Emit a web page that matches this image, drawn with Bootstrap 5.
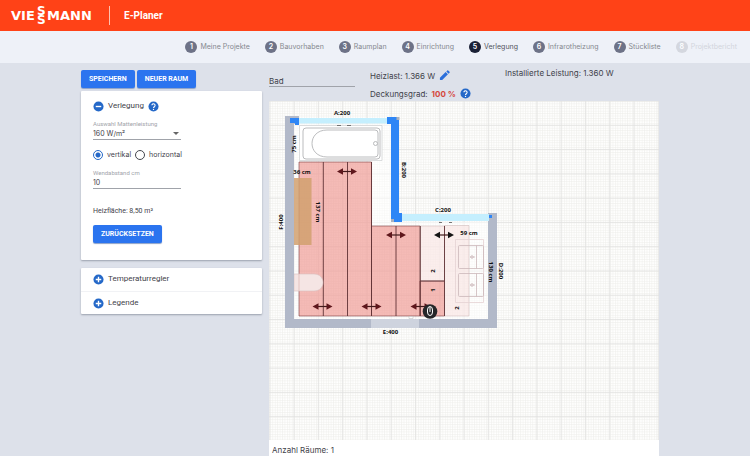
<!DOCTYPE html>
<html lang="de">
<head>
<meta charset="utf-8">
<meta name="viewport" content="width=device-width, initial-scale=1">
<title>E-Planer</title>
<link href="https://cdn.jsdelivr.net/npm/bootstrap@5.3.0/dist/css/bootstrap.min.css" rel="stylesheet">
<style>
:root { --brand: #ff4217; --action: #2b74ef; --icon: #2468c8; }
body { background: #dde1ea; color: #3f424a; font-family: Inter, Roboto, sans-serif; font-size: 8px; line-height: 12px; }
.topbar { background: var(--brand); height: 31px; padding: 0 8px; }
.logo { width: 88px; height: 31px; }
.logo text { font: bold 13px/1 "DejaVu Sans", sans-serif; fill: #fff; }
.logo .stacked { font-size: 12px; }
.topbar-rule { width: 1px; height: 19px; background: #ffc0ae; margin: 0 14px 0 13px; }
.product { font: 700 10px/14px Roboto, sans-serif; }
.steps { background: #eef1f8; height: 32px; padding: 0 13px; gap: 15px; font-size: 7px; }
.step { color: #85888f; gap: 3px; }
.step-no { width: 12px; height: 12px; border-radius: 50%; background: #6d7287; color: #fff; font-weight: 600; line-height: 12px; text-align: center; }
.step.current { color: #50535c; }
.step.current .step-no { background: #1b2136; }
.step.locked { color: #d2d5dc; }
.step.locked .step-no { background: #d4d7df; }
.workspace { padding: 7px 91px 0 81px; gap: 7px; }
.side { width: 181px; font-family: Roboto, sans-serif; }
.actions { gap: 2px; }
.act { background: var(--action); color: #fff; border: 0; border-radius: 2px; height: 18px; padding: 0 8px; font-size: 7px; font-weight: 700; line-height: 18px; box-shadow: 0 1px 1px #8aa0c8; }
.act:hover { background: #195fd6; color: #fff; }
.panel { background: #fff; border-radius: 1px; box-shadow: 0 1px 2px #9aa0ad; }
.panel-main { padding: 9px 12px 17px; margin-top: 3px; }
.toggle { border: 0; background: none; padding: 0; color: inherit; }
.ico { width: 11px; height: 11px; display: block; }
.fields { width: 88px; font-family: Inter, sans-serif; }
.caption { font-size: 6px; line-height: 8px; color: #a2a4aa; font-family: Roboto, sans-serif; }
.line-input { display: block; width: 100%; height: 12px; padding: 0; border: 0; border-bottom: 1px solid #a0a3aa; border-radius: 0; background: transparent; color: inherit; font-size: 7px; line-height: 11px; appearance: none; outline: 0; }
.pick::after { content: ""; position: absolute; right: 2px; bottom: 5px; border: 3px solid transparent; border-top-color: #666; border-bottom: 0; }
.radios { gap: 4px; margin: 9px 0 8px; font-family: Inter, sans-serif; font-size: 7px; }
.radios input { appearance: none; width: 10px; height: 10px; margin: 0; border: 1px solid #44474e; border-radius: 50%; background: #fff; }
.radios input:checked { border-color: var(--icon); background: radial-gradient(circle, var(--icon) 0 2px, #fff 3px); }
.area { font-size: 7px; }
.panel-row { padding: 5px 12px; height: 23px; }
.panel-row + .panel-row { border-top: 1px solid #f1f2f5; }
.facts { height: 31px; line-height: 10px; }
.room { width: 86px; margin: 5px 15px 0 0; }
.room .line-input { font-size: 8px; }
.load { width: 135px; }
.cover-row { margin-top: 7px; }
.cover { color: #d5473c; }
.installed { line-height: 6px; }
.plan { background: #fff; }
.plan svg { display: block; width: 100%; }
.plan text { font-family: "Open Sans", sans-serif; font-size: 6px; font-weight: 700; fill: #111; text-anchor: middle; }
.total { padding: 4px 3px 0; }
</style>
</head>
<body>
<svg class="d-none" aria-hidden="true">
  <symbol id="plus" viewBox="0 0 24 24"><circle cx="12" cy="12" r="11" fill="#2468c8"/><path d="M12 6v12M6 12h12" stroke="#fff" stroke-width="3"/></symbol>
  <symbol id="minus" viewBox="0 0 24 24"><circle cx="12" cy="12" r="11" fill="#2468c8"/><path d="M6 12h12" stroke="#fff" stroke-width="3"/></symbol>
  <symbol id="help" viewBox="0 0 24 24"><circle cx="12" cy="12" r="11" fill="#2468c8"/><path d="M8.5 9.5a3.5 3.5 0 1 1 5.7 2.7c-1.5 1.2-2.2 1.6-2.2 3.2" fill="none" stroke="#fff" stroke-width="2.4"/><circle cx="12" cy="18.3" r="1.5" fill="#fff"/></symbol>
  <symbol id="pencil" viewBox="0 0 24 24"><path d="M2 22v-5L14.500 4.500l5 5L7 22zM16 3l2-2q1-1 2 0l3 3q1 1 0 2l-2 2z" fill="#2b6fdb"/></symbol>
</svg>

<header class="topbar d-flex align-items-center">
  <svg class="logo" viewBox="0 0 88 31" role="img" aria-label="Viessmann">
    <text x="3" y="20">VIE</text><text class="stacked" x="29" y="15">S</text><text class="stacked" x="29" y="24">S</text><text x="39" y="20">MANN</text>
  </svg>
  <div class="topbar-rule"></div>
  <span class="product text-white">E-Planer</span>
</header>

<nav class="steps d-flex align-items-center justify-content-end text-nowrap" aria-label="Schritte">
  <a href="#" class="step d-flex align-items-center text-decoration-none"><span class="step-no">1</span>Meine Projekte</a>
  <a href="#" class="step d-flex align-items-center text-decoration-none"><span class="step-no">2</span>Bauvorhaben</a>
  <a href="#" class="step d-flex align-items-center text-decoration-none"><span class="step-no">3</span>Raumplan</a>
  <a href="#" class="step d-flex align-items-center text-decoration-none"><span class="step-no">4</span>Einrichtung</a>
  <a href="#" class="step current d-flex align-items-center text-decoration-none" aria-current="step"><span class="step-no">5</span>Verlegung</a>
  <a href="#" class="step d-flex align-items-center text-decoration-none"><span class="step-no">6</span>Infrarotheizung</a>
  <a href="#" class="step d-flex align-items-center text-decoration-none"><span class="step-no">7</span>Stückliste</a>
  <a href="#" class="step locked d-flex align-items-center text-decoration-none" aria-disabled="true"><span class="step-no">8</span>Projektbericht</a>
</nav>

<main class="workspace d-flex align-items-start">
  <aside class="side flex-shrink-0">
    <div class="actions d-flex">
      <button type="button" class="btn act">SPEICHERN</button>
      <button type="button" class="btn act">NEUER RAUM</button>
    </div>
    <form class="panel panel-main">
      <div class="d-flex align-items-center">
        <button type="button" class="toggle d-flex align-items-center gap-1"><svg class="ico"><use href="#minus"/></svg>Verlegung</button>
        <button type="button" class="toggle ms-1" aria-label="Hilfe"><svg class="ico"><use href="#help"/></svg></button>
      </div>
      <div class="fields pick position-relative mt-2">
        <label class="caption d-block" for="power">Auswahl Mattenleistung</label>
        <select class="line-input" id="power"><option>160 W/m²</option></select>
      </div>
      <div class="radios d-flex align-items-center">
        <input type="radio" name="dir" id="vert" checked><label for="vert">vertikal</label>
        <input type="radio" name="dir" id="hori"><label for="hori">horizontal</label>
      </div>
      <div class="fields">
        <label class="caption d-block" for="dist">Wendabstand cm</label>
        <input class="line-input" id="dist" type="text" value="10">
      </div>
      <p class="area mt-3 mb-2">Heizfläche: 8,50 m²</p>
      <button type="button" class="btn act">ZURÜCKSETZEN</button>
    </form>
    <div class="panel mt-2">
      <div class="panel-row"><button type="button" class="toggle d-flex align-items-center gap-1"><svg class="ico"><use href="#plus"/></svg>Temperaturregler</button></div>
      <div class="panel-row"><button type="button" class="toggle d-flex align-items-center gap-1"><svg class="ico"><use href="#plus"/></svg>Legende</button></div>
    </div>
  </aside>

  <section class="flex-grow-1">
    <div class="facts d-flex text-nowrap">
      <div class="room"><input class="line-input" type="text" value="Bad" aria-label="Raumname"></div>
      <div class="load">
        <div class="d-flex align-items-center gap-1">Heizlast: 1.366 W <button type="button" class="toggle" aria-label="Bearbeiten"><svg class="ico"><use href="#pencil"/></svg></button></div>
        <div class="cover-row d-flex align-items-center gap-1">Deckungsgrad: <b class="cover">100 %</b><button type="button" class="toggle" aria-label="Hilfe"><svg class="ico"><use href="#help"/></svg></button></div>
      </div>
      <div class="installed">Installierte Leistung: 1.360 W</div>
    </div>
    <div class="plan">
      <svg viewBox="269 101 390 339" role="img" aria-label="Grundriss Bad">
        <defs>
          <pattern id="fine" x="269.900" y="101" width="2.430" height="2.430" patternUnits="userSpaceOnUse"><path d="M0 .5H2.430M.5 0V2.430" stroke="#eeeeeb" stroke-width=".6"/></pattern>
          <pattern id="coarse" x="269.300" y="100.500" width="24.280" height="24.280" patternUnits="userSpaceOnUse"><path d="M0 .5H24.280M.5 0V24.280" stroke="#e2e2e0" stroke-width=".8"/></pattern>
          <g id="arrows"><path d="M-6 0H6" stroke="#40191a" stroke-width="1.200"/><path d="M-10 0l6-3.200v6.400zM10 0l-6-3.200v6.400z"/></g>
        </defs>
        <path fill="#fff" d="M269 101h390v339H269z"/>
        <path fill="url(#fine)" d="M269 101h390v339H269z"/>
        <path fill="url(#coarse)" d="M269 101h390v339H269z"/>
        <path fill="#fff" fill-opacity=".5" d="M294 124h97v98h97v97H294z"/>
        <g fill="#e5544c" fill-opacity=".4" stroke="#75373a" stroke-width=".6">
          <path d="M299 162h72.500v154H299zM371.500 226H420v90h-48.500zM420 281h24.500v35H420z"/>
        </g>
        <path fill="#f7dedb" fill-opacity=".5" stroke="#c9b3b3" stroke-width=".5" d="M420 226h24.500v55H420zM444.500 225.500H469V316h-24.500z"/>
        <path d="M323.300 162v154M347.500 162v154M371.500 162v154M396 226v90M420.300 226v90M444.500 226v90M420 281h24.500" stroke="#603236" stroke-width=".9"/>
        <path d="M294 178h17.500v67H294z" fill="#d1a06e" fill-opacity=".85"/>
        <path d="M294 274h20c12 0 12 17 0 17h-20z" fill="#f5e5e4" stroke="#d8c1c1" stroke-width=".6"/>
        <path d="M299 274v17" stroke="#dcb4b2" stroke-width=".7"/>
        <g fill="#fff" stroke="#a9abad" stroke-width=".8">
          <path d="M299.500 125.500h82.500v35h-82.500z" stroke="#d2d4d6"/>
          <rect x="303" y="128" width="77" height="31" rx="3"/>
          <path d="M327 130h48q3 0 3 3v21q0 3-3 3h-48c-20 0-20-27 0-27z"/>
          <circle cx="375.500" cy="143.500" r="2"/>
        </g>
        <g fill="none" stroke="#ccb8ba" stroke-width=".8">
          <path d="M455.500 239.500h28v63h-28z" stroke="#e4d2d3"/>
          <rect x="458.500" y="245.500" width="25" height="23" rx="1"/><path d="M476.500 245.500v23M475 257h-5"/><circle cx="472" cy="257" r="1.300"/>
          <rect x="458.500" y="273.500" width="25" height="23" rx="1"/><path d="M476.500 273.500v23M475 285h-5"/><circle cx="472" cy="285" r="1.300"/>
        </g>
        <path fill="#b2b9c9" d="M285 116h14v8h-5v195h194V213h9v115H285z"/>
        <path fill="#ced3de" d="M371 319h48v9h-48z"/>
        <path fill="#c5effe" d="M299 118h88v5.500h-88zM402 214h87v7h-87z"/>
        <path fill="#2e86f6" d="M290 118h9v7h-4v-2h-5zM387 117h12v96h3v9h-11v-98h-4zM489 215h3v3h-3z"/>
        <path fill="#a9b1bf" d="M396.500 117h3v3h-3zM391 219h3v3h-3z"/>
        <path d="M337 125.500h4M347 125.500h4M439 222.500h3M449 222.500h3" stroke="#666" stroke-width=".9"/>
        <g fill="#5e171c"><use href="#arrows" x="347" y="171.500"/><use href="#arrows" x="396" y="235"/><use href="#arrows" x="322.500" y="306.500"/><use href="#arrows" x="371.500" y="306.500"/><use href="#arrows" x="420.500" y="306.500"/></g>
        <use href="#arrows" x="444" y="235" fill="#141414"/>
        <circle cx="430" cy="311.500" r="7.300" fill="#252628"/>
        <path d="M427.500 310q0-3.500 2.500-3.500t2.500 3.500v2q0 3.500-2.500 3.500t-2.500-3.500zM430 307v5" fill="none" stroke="#fff" stroke-width="1"/>
        <path d="M409 316.500h4v2h-4z" fill="#fff" stroke="#aaa" stroke-width=".4"/>
        <text x="342" y="114.500">A:200</text>
        <text x="443" y="211.500">C:200</text>
        <text x="390.500" y="333.500">E:400</text>
        <text transform="translate(402 170) rotate(90)">B:200</text>
        <text transform="translate(499 271) rotate(90)">D:200</text>
        <text transform="translate(283 222) rotate(-90)">F:400</text>
        <text transform="translate(295.500 144) rotate(-90)">75 cm</text>
        <text x="302" y="173.500">36 cm</text>
        <text x="469" y="235">59 cm</text>
        <text transform="translate(316 212) rotate(90)">137 cm</text>
        <text transform="translate(489 272) rotate(90)">130 cm</text>
        <text transform="translate(434.500 271) rotate(-90)">2</text>
        <text transform="translate(434.500 290) rotate(-90)">1</text>
        <text transform="translate(459 308) rotate(-90)">2</text>
      </svg>
      <div class="total">Anzahl Räume: 1</div>
    </div>
  </section>
</main>
<script src="https://cdn.jsdelivr.net/npm/bootstrap@5.3.0/dist/js/bootstrap.bundle.min.js"></script>
</body>
</html>
